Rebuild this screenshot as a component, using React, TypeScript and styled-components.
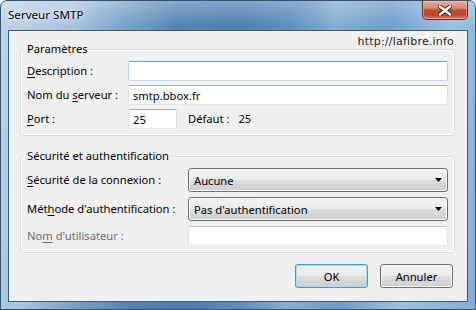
import React from "react";
import styled, { createGlobalStyle } from "styled-components";

const GlobalStyle = createGlobalStyle`
  html, body {
    margin: 0;
    padding: 0;
    background: #ffffff;
  }
  * {
    box-sizing: border-box;
  }
`;

const font = `"Noto Sans", "Open Sans", sans-serif`;
const size = "11.2px";

const Window = styled.div`
  width: 476px;
  height: 310px;
  display: flex;
  flex-direction: column;
  border: 1px solid #34536f;
  border-radius: 7px 7px 0 0;
  overflow: hidden;
  font-family: ${font};
  font-size: ${size};
  color: #000;
  background:
    linear-gradient(to bottom, rgba(255, 255, 255, 0.28), rgba(255, 255, 255, 0) 26px),
    linear-gradient(
      100deg,
      #bed3e8 0%,
      #a9c4df 14%,
      #7aa2c9 24%,
      #5584b3 34%,
      #4c7eb0 46%,
      #5f8fbe 56%,
      #86add3 64%,
      #6f9ccb 74%,
      #9dbfe0 86%,
      #86aed6 100%
    );
`;

const TitleBar = styled.div`
  height: 29px;
  flex: none;
  display: flex;
  justify-content: space-between;
  align-items: flex-start;
  padding: 0 7px;
`;

const Title = styled.div`
  margin-top: 6px;
  line-height: 16px;
  font-size: 11.6px;
  color: #000;
  text-shadow: 0 0 6px rgba(255, 255, 255, 0.9), 0 0 3px rgba(255, 255, 255, 0.8);
`;

const CloseButton = styled.div`
  width: 46px;
  height: 19px;
  display: flex;
  align-items: center;
  justify-content: center;
  border: 1px solid #6b2a1f;
  border-top: none;
  border-radius: 0 0 5px 5px;
  background: linear-gradient(
    to bottom,
    #e9ad9f 0%,
    #d98872 40%,
    #c4472d 52%,
    #c2442a 75%,
    #dc7d5f 100%
  );
  box-shadow: inset 0 0 0 1px rgba(255, 220, 200, 0.45);
`;

const Client = styled.div`
  flex: 1;
  margin: 0 7px 7px;
  border: 1px solid #3d5b7a;
  background: #f0f0f0;
  display: flex;
  flex-direction: column;
  padding: 0 12px 0 11px;
`;

const Header = styled.div`
  height: 11px;
  padding-top: 4px;
  display: flex;
  justify-content: flex-end;
  align-items: flex-start;
  padding-right: 1px;
`;

const SiteLink = styled.span`
  font-family: "DejaVu Sans", Verdana, sans-serif;
  font-size: 11px;
  line-height: 14px;
  color: #1e1e1e;
  letter-spacing: 0.2px;
`;

const Group = styled.fieldset<{ $gapTop?: number }>`
  margin: ${(p) => p.$gapTop ?? 0}px 0 0;
  padding: 5px 6px 6px 6px;
  border: 1px solid #d5dfe5;
  border-radius: 3px;
  box-shadow: inset 0 0 0 1px #ffffff;
  min-width: 0;
`;

const Legend = styled.legend`
  margin-left: -2px;
  padding: 0 2px;
  line-height: 14px;
  background: #f0f0f0;
`;

const Form = styled.div<{ $label: number; $gap: number }>`
  display: grid;
  grid-template-columns: ${(p) => p.$label}px 1fr;
  row-gap: ${(p) => p.$gap}px;
  align-items: center;
`;

const Label = styled.label<{ $disabled?: boolean }>`
  line-height: 16px;
  white-space: nowrap;
  color: ${(p) => (p.$disabled ? "#6d6d6d" : "#000")};
`;

const Key = styled.u`
  text-decoration-thickness: 1px;
  text-underline-offset: 2px;
`;

const TextBox = styled.input<{ $focused?: boolean; $width?: number }>`
  height: 20px;
  width: ${(p) => (p.$width ? `${p.$width}px` : "100%")};
  margin: 0;
  padding: 0 4px;
  font-family: ${font};
  font-size: ${size};
  color: #000;
  background: #fff;
  border: 1px solid;
  border-radius: 2px;
  border-color: ${(p) =>
    p.$focused ? "#5d9bcb #b4d2ec #c4dcf0 #b4d2ec" : "#abadb3 #dbdfe6 #e3e9ef #e2e3ea"};
  outline: none;
  &:disabled {
    border-color: #c6c8cc #e0e2e6 #e4e6ea #e0e2e6;
    background: #fff;
  }
`;

const PortLine = styled.div`
  display: flex;
  align-items: center;
`;

const Note = styled.span<{ $left: number }>`
  margin-left: ${(p) => p.$left}px;
  line-height: 16px;
`;

const Combo = styled.div`
  height: 24px;
  display: flex;
  align-items: center;
  justify-content: space-between;
  padding: 0 4px 0 5px;
  border: 1px solid #707070;
  border-radius: 3px;
  box-shadow: inset 0 0 0 1px #fbfbfb;
  background: linear-gradient(
    to bottom,
    #f3f3f3 0%,
    #ebebeb 48%,
    #dddddd 52%,
    #cfcfcf 100%
  );
`;

const Buttons = styled.div`
  display: flex;
  justify-content: flex-end;
  gap: 12px;
  margin-top: 11px;
  padding-right: 2px;
`;

const Button = styled.button<{ $default?: boolean }>`
  width: 73px;
  height: 24px;
  margin: 0;
  padding: 0;
  font-family: ${font};
  font-size: ${size};
  color: #000;
  border: 1px solid ${(p) => (p.$default ? "#3c9ad6" : "#707070")};
  border-radius: 3px;
  box-shadow: inset 0 0 0 1px ${(p) => (p.$default ? "#9fe0f8" : "#fbfbfb")};
  background: linear-gradient(
    to bottom,
    #f2f2f2 0%,
    #ebebeb 48%,
    #dddddd 52%,
    #cfcfcf 100%
  );
`;

const CloseGlyph = () => (
  <svg width="14" height="11" viewBox="0 0 14 11">
    <path
      d="M2 1.5 L12 9.5 M12 1.5 L2 9.5"
      stroke="#4a1c14"
      strokeWidth="4.4"
      strokeLinecap="square"
    />
    <path
      d="M2 1.5 L12 9.5 M12 1.5 L2 9.5"
      stroke="#ffffff"
      strokeWidth="2.4"
      strokeLinecap="square"
    />
  </svg>
);

const Arrow = () => (
  <svg width="8" height="4" viewBox="0 0 8 4">
    <path d="M0 0 H7 L3.5 4 Z" fill="#000" />
  </svg>
);

export default function App() {
  return (
    <>
      <GlobalStyle />
      <Window>
        <TitleBar>
          <Title>Serveur SMTP</Title>
          <CloseButton>
            <CloseGlyph />
          </CloseButton>
        </TitleBar>
        <Client>
          <Header>
            <SiteLink>http://lafibre.info</SiteLink>
          </Header>
          <Group>
            <Legend>Paramètres</Legend>
            <Form $label={101} $gap={4}>
              <Label>
                <Key>D</Key>escription :
              </Label>
              <TextBox $focused defaultValue="" />
              <Label>
                Nom du <Key>s</Key>erveur :
              </Label>
              <TextBox defaultValue="smtp.bbox.fr" />
              <Label>
                <Key>P</Key>ort :
              </Label>
              <PortLine>
                <TextBox $width={49} defaultValue="25" />
                <Note $left={11}>Défaut :</Note>
                <Note $left={9}>25</Note>
              </PortLine>
            </Form>
          </Group>
          <Group $gapTop={13}>
            <Legend>Sécurité et authentification</Legend>
            <Form $label={161} $gap={5}>
              <Label>
                <Key>S</Key>écurité de la connexion :
              </Label>
              <Combo>
                <span>Aucune</span>
                <Arrow />
              </Combo>
              <Label>
                Mét<Key>h</Key>ode d'authentification :
              </Label>
              <Combo>
                <span>Pas d'authentification</span>
                <Arrow />
              </Combo>
              <Label $disabled>
                No<Key>m</Key> d'utilisateur :
              </Label>
              <TextBox disabled defaultValue="" />
            </Form>
          </Group>
          <Buttons>
            <Button $default>OK</Button>
            <Button>Annuler</Button>
          </Buttons>
        </Client>
      </Window>
    </>
  );
}
